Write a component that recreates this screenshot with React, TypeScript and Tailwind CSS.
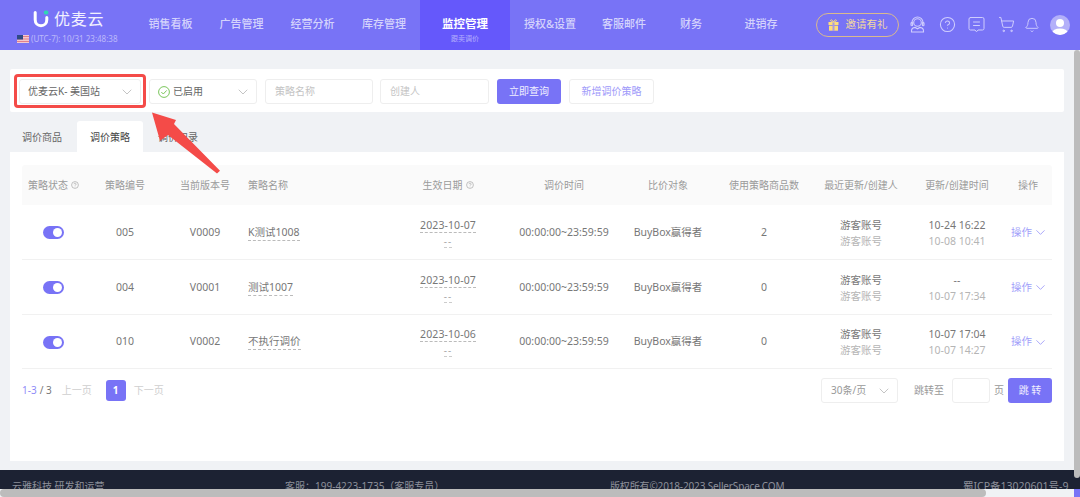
import { Bell, ChevronDown, CircleHelp, ShoppingCart } from 'lucide-react';
import { ReactNode } from 'react';

const gridCols = 'grid grid-cols-[63px_80px_80px_150px_106px_126px_82px_110px_84px_108px_40px]';

const navLeft = [
  { label: '销售看板', width: 'w-[71px]' },
  { label: '广告管理', width: 'w-[71px]' },
  { label: '经营分析', width: 'w-[71px]' },
  { label: '库存管理', width: 'w-[72px]' },
];

const navRight = [
  { label: '授权&设置', width: 'w-[80px]' },
  { label: '客服邮件', width: 'w-[68px]' },
  { label: '财务', width: 'w-[66px]' },
  { label: '进销存', width: 'w-[74px]' },
];

const rows = [
  { id: '005', version: 'V0009', name: 'K测试1008', date: '2023-10-07', count: '2', updated: '10-24 16:22', created: '10-08 10:41', h: 'h-[55px]' },
  { id: '004', version: 'V0001', name: '测试1007', date: '2023-10-07', count: '0', updated: '--', created: '10-07 17:34', h: 'h-[55px]' },
  { id: '010', version: 'V0002', name: '不执行调价', date: '2023-10-06', count: '0', updated: '10-07 17:04', created: '10-07 14:27', h: 'h-[54px]' },
];

const Hint = () => (
  <svg width="8" height="8" viewBox="0 0 16 16" fill="none" stroke="#a8a8a8" strokeWidth="1.4" className="ml-[3px]">
    <circle cx="8" cy="8" r="6.8" />
    <path d="M6 6.4a2 2 0 1 1 3 1.7c-.7.4-1 .8-1 1.5M8 11.4v1" />
  </svg>
);

const HeadCell = ({ children, className = 'justify-center' }: { children: ReactNode; className?: string }) => (
  <div className={`flex items-center text-[10px] text-[#9a9a9a] ${className}`}>{children}</div>
);

const Logo = () => (
  <svg width="16" height="18" viewBox="0 0 16 18" className="shrink-0">
    <path d="M2.2 2.5v7.2c0 3.5 2.4 6 5.8 6s5.800-2.500 5.800-6V7.500" fill="none" stroke="#ffffff" strokeWidth="3" strokeLinecap="round" />
    <rect x="10.800" y="0.600" width="4.600" height="4" rx="1.800" fill="#2fd6b4" />
  </svg>
);

const Flag = () => (
  <svg width="12" height="8" viewBox="0 0 12 8" className="shrink-0">
    <rect width="12" height="8" fill="#f3c9cf" />
    <path d="M0 1.500h12M0 4h12M0 6.500h12" stroke="#e0808c" strokeWidth="1" />
    <rect width="6" height="4.500" fill="#2f4a86" />
  </svg>
);

const GiftIcon = () => (
  <svg width="11" height="12" viewBox="0 0 11 12" className="shrink-0">
    <rect x="0.500" y="3" width="10" height="3" fill="#ffdd7a" />
    <rect x="1" y="6.700" width="9" height="5" fill="#ffdd7a" />
    <rect x="4.500" y="3" width="2" height="9" fill="#a99be0" />
    <path d="M5.500 3C4.500.8 3 .4 2.600 1.200 2.200 2.200 3.800 3 5.500 3c1.700 0 3.300-.8 2.900-1.800C8 .4 6.500.8 5.500 3z" fill="none" stroke="#ffdd7a" strokeWidth=".9" />
  </svg>
);

const HeadsetIcon = () => (
  <svg width="15" height="17" viewBox="0 0 15 17" fill="none" stroke="#cfcdfd" strokeWidth="1.100" strokeLinecap="round">
    <circle cx="7.500" cy="6.500" r="3.800" />
    <path d="M2 8V6.500a5.500 5.500 0 0 1 11 0V8" />
    <rect x="1" y="6.500" width="1.600" height="3.200" rx=".8" />
    <rect x="12.400" y="6.500" width="1.600" height="3.200" rx=".8" />
    <path d="M1.500 16v-1.200c0-2 2-3.200 3.600-3.400l2.400 1.400 2.400-1.400c1.600.2 3.600 1.400 3.600 3.400V16z" />
  </svg>
);

const MessageIcon = () => (
  <svg width="17" height="17" viewBox="0 0 17 17" fill="none" stroke="#cfcdfd" strokeWidth="1" strokeLinejoin="round" strokeLinecap="round" className="ml-[12px]">
    <path d="M2.500 1.500h12a1.500 1.500 0 0 1 1.500 1.500v9.500a1.500 1.500 0 0 1-1.500 1.500h-4.500l-1.500 1.800-1.500-1.800h-4.500a1.500 1.500 0 0 1-1.500-1.500V3a1.500 1.500 0 0 1 1.500-1.500z" />
    <path d="M5.500 6h6M5.500 9.500h6" />
  </svg>
);

const Avatar = () => (
  <svg width="20" height="20" viewBox="0 0 20 20" className="ml-[10px]">
    <defs>
      <clipPath id="avatar-clip">
        <circle cx="10" cy="10" r="10" />
      </clipPath>
    </defs>
    <circle cx="10" cy="10" r="10" fill="#b3b0f9" />
    <g clipPath="url(#avatar-clip)" fill="#ffffff">
      <circle cx="10" cy="8" r="4" />
      <ellipse cx="10" cy="18" rx="8" ry="4.500" />
    </g>
  </svg>
);

const Header = () => (
  <header className="flex h-[50px] items-stretch bg-[#7873f6]">
    <div className="w-[135px] shrink-0 pl-[17px]">
      <div className="flex h-[32px] items-center pl-[16px] pt-[6px]">
        <Logo />
        <span className="ml-[5px] text-[16px] leading-none tracking-[0.8px] text-white/90">优麦云</span>
      </div>
      <div className="flex items-center gap-[2px] whitespace-nowrap text-[8px] leading-[13px] text-white/50">
        <Flag />
        <span>(UTC-7): 10/31 23:48:38</span>
      </div>
    </div>
    {navLeft.map(item => (
      <div key={item.label} className={`${item.width} flex items-center justify-center pb-[2px] text-[11px] font-medium text-white/70`}>
        {item.label}
      </div>
    ))}
    <div className="flex w-[90px] flex-col items-center bg-[#6558fb] pt-[16px]">
      <span className="text-[11.5px] font-bold leading-[16px] text-white">监控管理</span>
      <span className="mt-[2px] text-[7px] leading-[10px] text-white/50">跟卖调价</span>
    </div>
    {navRight.map(item => (
      <div key={item.label} className={`${item.width} flex items-center justify-center pb-[2px] text-[11px] font-medium text-white/70`}>
        {item.label}
      </div>
    ))}
    <div className="ml-[18px] flex items-center pb-[1px]">
      <div className="flex h-[24px] w-[83px] items-center justify-center gap-[7px] rounded-full border border-[#d9b98f] text-[10.5px] text-[#f3d9a0]">
        <GiftIcon />
        <span>邀请有礼</span>
      </div>
      <div className="ml-[11px] flex items-center">
        <HeadsetIcon />
        <CircleHelp size={17} color="#cfcdfd" strokeWidth={1.5} className="ml-[14px]" />
        <MessageIcon />
        <ShoppingCart size={17} color="#cfcdfd" strokeWidth={1.4} className="ml-[13px]" />
        <Bell size={16} color="#cfcdfd" strokeWidth={1.4} className="ml-[9px]" />
        <Avatar />
      </div>
    </div>
  </header>
);

const Filters = () => (
  <div className="flex h-[43px] w-[1054px] items-start rounded-[2px] bg-white pl-[9px] pt-[10px] text-[10px]">
    <div className="flex h-[25px] w-[122px] items-center justify-between rounded-[3px] border border-[#eeeeee] pl-[8px] pr-[5px] text-[#666666]">
      <span>优麦云K- 美国站</span>
      <ChevronDown size={16} color="#b5b5b5" strokeWidth={1.2} />
    </div>
    <div className="ml-[8px] flex h-[25px] w-[108px] items-center justify-between rounded-[3px] border border-[#eeeeee] pl-[8px] pr-[5px] text-[#666666]">
      <span className="flex items-center gap-[3px]">
        <svg width="12" height="12" viewBox="0 0 12 12" fill="none" stroke="#6cc04a" strokeWidth="0.9">
          <circle cx="6" cy="6" r="5.400" />
          <path d="M3.300 6l2 2 3.400-3.600" />
        </svg>
        已启用
      </span>
      <ChevronDown size={16} color="#b5b5b5" strokeWidth={1.2} />
    </div>
    <div className="ml-[8px] flex h-[25px] w-[108px] items-center rounded-[3px] border border-[#eeeeee] pl-[9px] text-[#c4c4c4]">策略名称</div>
    <div className="ml-[7px] flex h-[25px] w-[109px] items-center rounded-[3px] border border-[#eeeeee] pl-[9px] text-[#c4c4c4]">创建人</div>
    <button className="ml-[8px] flex h-[25px] w-[64px] items-center justify-center rounded-[3px] bg-[#7873f6] text-white/90">立即查询</button>
    <button className="ml-[8px] flex h-[25px] w-[85px] items-center justify-center rounded-[3px] border border-[#eeeeee] text-[#9e9afa]">新增调价策略</button>
  </div>
);

const Tabs = () => (
  <div className="mt-[9px] flex h-[31px] items-stretch text-[10px] text-[#666666]">
    <div className="flex w-[67px] items-center pl-[12px] pt-[2px]">调价商品</div>
    <div className="flex w-[66px] items-center justify-center rounded-t-[3px] bg-white pt-[2px] text-[#444444]">调价策略</div>
    <div className="flex w-[66px] items-center pl-[15px] pt-[2px]">调价记录</div>
  </div>
);

const Toggle = () => (
  <div className="flex h-[13px] w-[21px] items-center justify-end rounded-full bg-[#7873f6] pr-[2px]">
    <div className="h-[9px] w-[9px] rounded-full bg-white" />
  </div>
);

const Row = ({ row }: { row: (typeof rows)[number] }) => (
  <div className={`${gridCols} ${row.h} items-center border-b border-[#f1f1f1] pt-[1px] text-[10.5px] text-[#777777]`}>
    <div className="flex justify-center">
      <Toggle />
    </div>
    <div className="text-center">{row.id}</div>
    <div className="text-center">{row.version}</div>
    <div className="pl-[3px]">
      <span className="border-b border-dashed border-[#bbbbbb] pb-[1px]">{row.name}</span>
    </div>
    <div className="flex flex-col items-center">
      <span className="border-b border-dashed border-[#bbbbbb] leading-[14px] tracking-[0.1px]">{row.date}</span>
      <span className="mt-[2px] border-b border-dashed border-[#cccccc] text-[10px] leading-[12px] tracking-[1px] text-[#aaaaaa]">--</span>
    </div>
    <div className="text-center">00:00:00~23:59:59</div>
    <div className="text-center">BuyBox赢得者</div>
    <div className="text-center">{row.count}</div>
    <div className="flex flex-col items-center leading-[16px]">
      <span>游客账号</span>
      <span className="text-[#b5b5b5]">游客账号</span>
    </div>
    <div className="flex flex-col items-center leading-[16px]">
      <span>{row.updated}</span>
      <span className="text-[#b5b5b5]">{row.created}</span>
    </div>
    <div className="flex items-center gap-[1px] text-[#a29ffa]">
      <span className="whitespace-nowrap">操作</span>
      <ChevronDown size={15} color="#8f8bf8" strokeWidth={1.2} />
    </div>
  </div>
);

const Table = () => (
  <div>
    <div className={`${gridCols} h-[40px] rounded-t-[3px] bg-[#fafafa]`}>
      <HeadCell>策略状态<Hint /></HeadCell>
      <HeadCell>策略编号</HeadCell>
      <HeadCell>当前版本号</HeadCell>
      <HeadCell className="justify-start pl-[3px]">策略名称</HeadCell>
      <HeadCell>生效日期<Hint /></HeadCell>
      <HeadCell>调价时间</HeadCell>
      <HeadCell>比价对象</HeadCell>
      <HeadCell>使用策略商品数</HeadCell>
      <HeadCell>最近更新/创建人</HeadCell>
      <HeadCell>更新/创建时间</HeadCell>
      <HeadCell className="justify-center pr-[6px]">操作</HeadCell>
    </div>
    {rows.map(row => (
      <Row key={row.id} row={row} />
    ))}
  </div>
);

const Pager = () => (
  <div className="mt-[9px] flex h-[25px] items-center justify-between text-[10px]">
    <div className="flex items-center">
      <span className="text-[#8f8bf8]">1-3</span>
      <span className="ml-[3px] text-[#777777]">/ 3</span>
      <span className="ml-[10px] text-[#cfcfcf]">上一页</span>
      <span className="ml-[14px] flex h-[21px] w-[20px] items-center justify-center rounded-[3px] bg-[#7873f6] font-bold text-white">1</span>
      <span className="ml-[8px] text-[#cfcfcf]">下一页</span>
    </div>
    <div className="flex items-center text-[#999999]">
      <div className="flex h-[25px] w-[77px] items-center justify-between rounded-[3px] border border-[#eeeeee] pl-[9px] pr-[5px]">
        <span>30条/页</span>
        <ChevronDown size={16} color="#b5b5b5" strokeWidth={1.2} />
      </div>
      <span className="ml-[16px]">跳转至</span>
      <div className="ml-[8px] h-[25px] w-[38px] rounded-[3px] border border-[#eeeeee]" />
      <span className="ml-[4px]">页</span>
      <button className="ml-[4px] flex h-[25px] w-[44px] items-center justify-center rounded-[3px] bg-[#7873f6] text-white/90">跳 转</button>
    </div>
  </div>
);

const Footer = () => (
  <footer className="mt-[9px] h-[27px] whitespace-nowrap bg-[#1c2233] text-[10px] text-[#8d909a]">
    <div className="flex h-[32px] items-center pl-[12px] pt-[1px]">
      <span className="w-[273px]">云雅科技 研发和运营</span>
      <span className="w-[325px]">客服：199-4223-1735（客服专员）</span>
      <span className="w-[353px] tracking-[-0.15px]">版权所有©2018-2023 SellerSpace.COM</span>
      <span className="text-[10.5px]">蜀ICP备13020601号-9</span>
    </div>
  </footer>
);

const App = () => (
  <div className="relative h-[497px] w-[1080px] overflow-hidden bg-[#f0f2f5] font-['Noto_Sans','Noto_Sans_CJK_SC',sans-serif]">
    <Header />
    <main className="px-[10px] pt-[19px]">
      <Filters />
      <Tabs />
      <div className="h-[309px] w-[1054px] bg-white px-[12px] pt-[13px]">
        <Table />
        <Pager />
      </div>
    </main>
    <Footer />

    {/* annotation over the screenshot */}
    <div className="absolute left-[14px] top-[74px] h-[34px] w-[132px] rounded-[4px] border-[3px] border-[#f44b48]" />
    <svg className="absolute left-0 top-0" width="1080" height="497" viewBox="0 0 1080 497">
      <polygon points="152,112.500 176,120 174,124 220,170.700 217,173.500 168,135 160,140.700" fill="#f44b48" />
    </svg>

    {/* scrollbars */}
    <div className="absolute right-0 top-[50px] h-[428px] w-[6px] rounded-[3px] bg-[#bcbcbc]" />
    <div className="absolute bottom-0 left-0 h-[8px] w-full bg-[#f0f2f5]" />
    <div className="absolute bottom-0 left-0 h-[8px] w-[986px] rounded-[4px] bg-[#bcbcbc]" />
    <div className="absolute bottom-0 right-0 h-[8px] w-[6px] bg-[#7873f6]" />
  </div>
);

export default App;
